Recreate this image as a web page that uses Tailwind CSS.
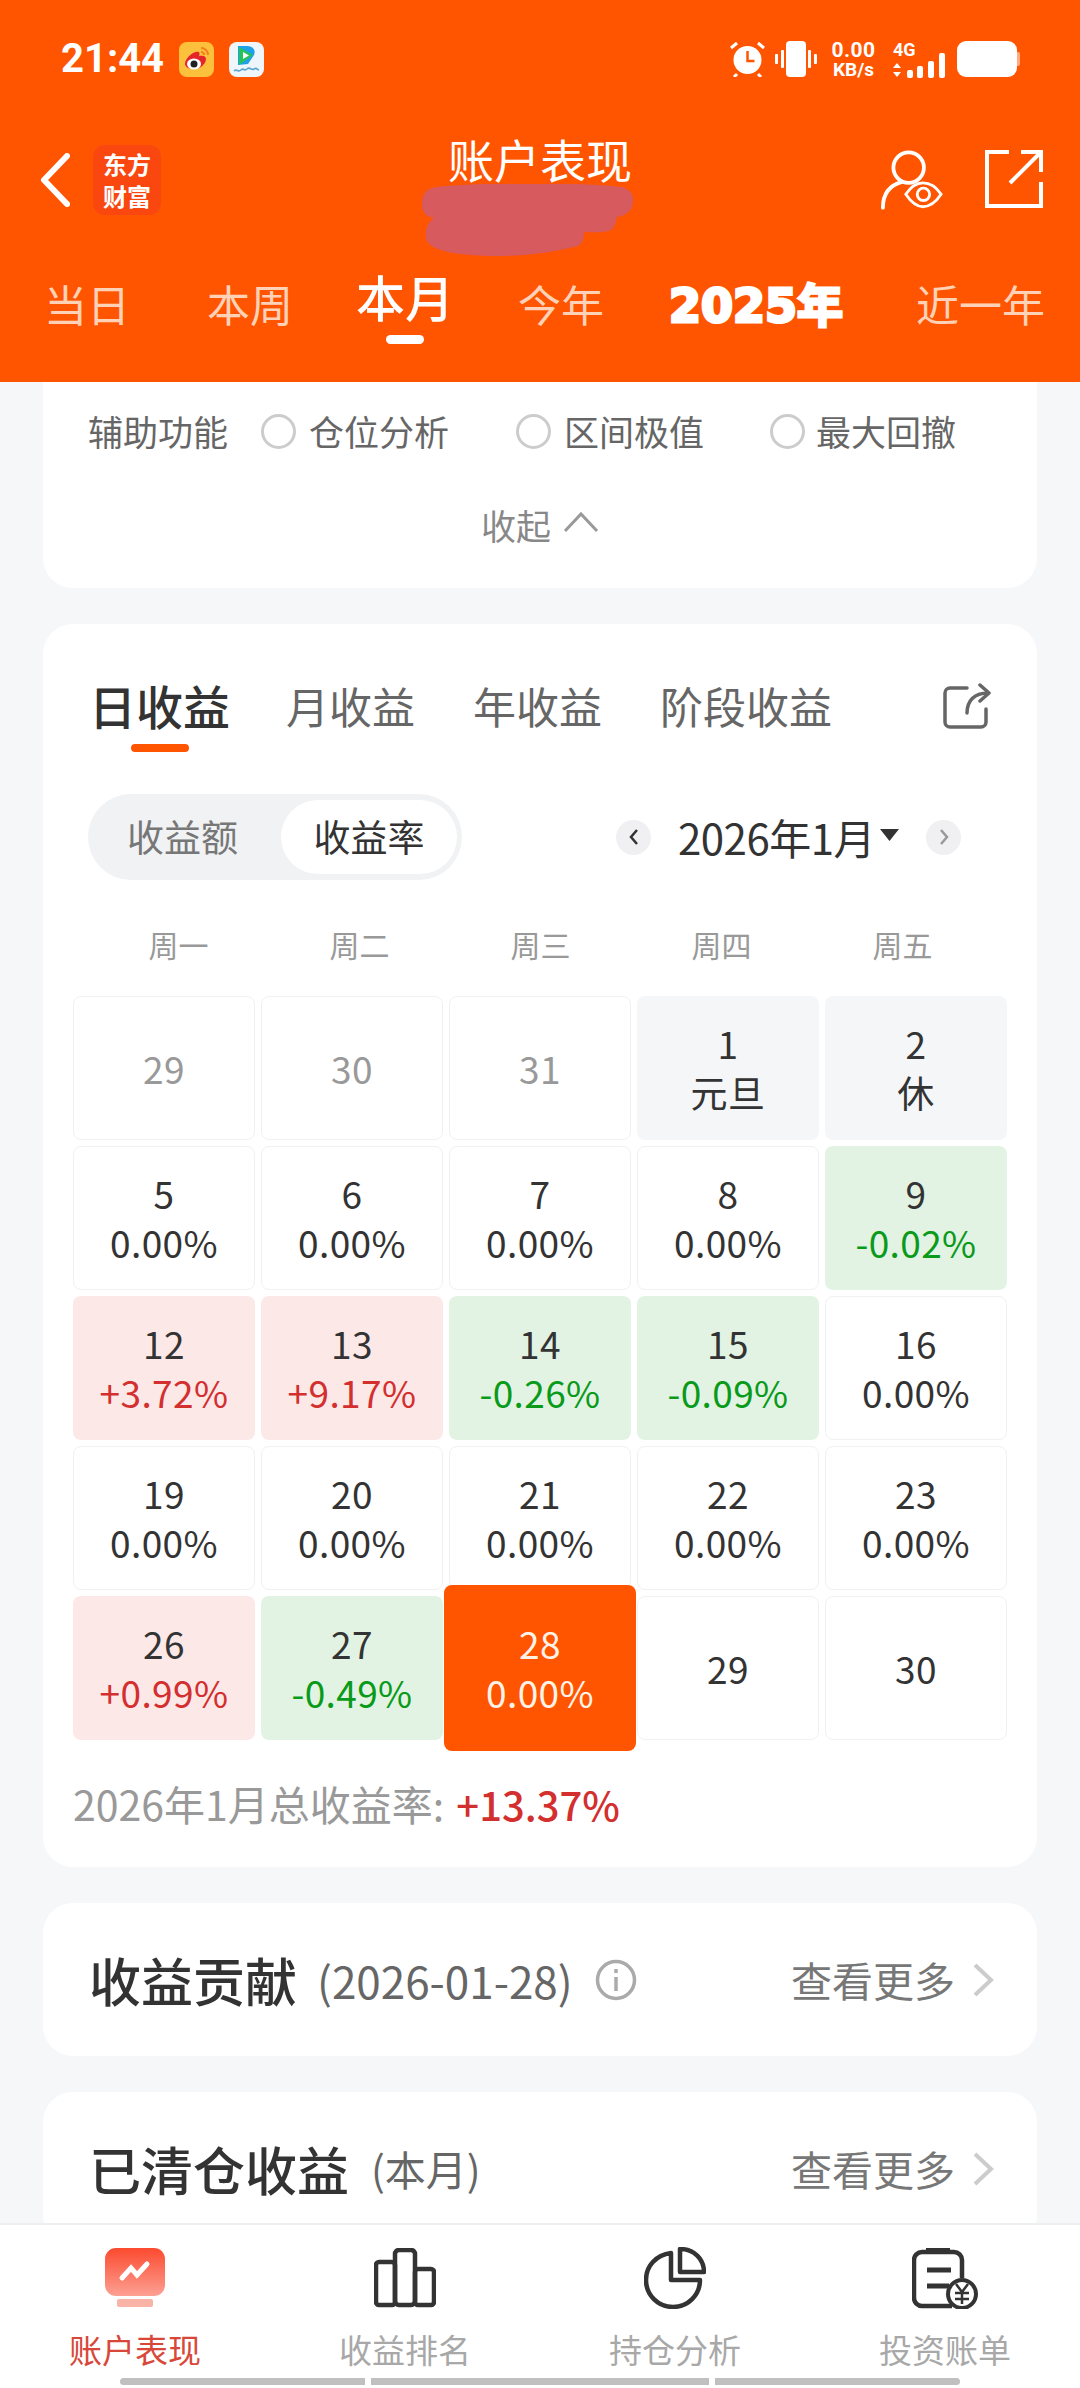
<!DOCTYPE html>
<html lang="zh-CN">
<head>
<meta charset="utf-8">
<script src="https://cdn.jsdelivr.net/npm/@tailwindcss/browser@4"></script>
</head>
<body class="bg-[#f6f7f9]">
<div class="w-[1080px] h-[2388px] flex flex-col overflow-hidden bg-[#f6f7f9] text-[#333] font-['Noto_Sans_CJK_SC','Noto_Sans',sans-serif]">

  <!-- Header -->
  <header class="h-[382px] shrink-0 bg-[#ff5500] text-white relative">
    <!-- status bar -->
    <div class="h-[118px] flex items-start justify-between pt-[41px] pl-[61px] pr-[60px]">
      <div class="flex items-center gap-[15px] h-[36px]">
        <span class="font-['Roboto',sans-serif] font-bold text-[40px] leading-none w-[103px]">21:44</span>
        <svg class="w-[35px] h-[35px]" viewBox="0 0 35 35"><rect width="35" height="35" rx="8" fill="#fbc13c"/><path d="M6 22c0-5 6-11 11-12 4-1 4 2 3 4 4-1 7 0 7 3 0 5-6 10-12 10-5 0-9-2-9-5z" fill="#e6252b"/><ellipse cx="15" cy="22" rx="7" ry="5.5" fill="#fff"/><circle cx="15" cy="22" r="3.5" fill="#222"/><path d="M22 6c4 0 7 3 7 7M22 10c2 0 3 1 3 3" stroke="#f4801f" stroke-width="2" fill="none"/></svg>
        <svg class="w-[35px] h-[35px]" viewBox="0 0 35 35"><rect width="35" height="35" rx="8" fill="#eef6fb"/><path d="M9 4h9c6 0 9 4 7 9l-6 9-10 1z" fill="#1fa1e8"/><path d="M10 5l14 8-14 10z" fill="#27c25b"/><path d="M14 10l6 3.5-6 3.5z" fill="#fff"/><path d="M5 29c3-3 4 2 7-1s3 2 6-1 4 2 7 0 3 1 5 1" stroke="#5aa6d0" stroke-width="1.6" fill="none"/></svg>
      </div>
      <div class="flex items-start h-[36px]">
        <svg class="w-[35px] h-[36px]" viewBox="0 0 35 36" fill="none" stroke="#fff"><circle cx="17.500" cy="19" r="14" fill="#fff" stroke="none"/><path d="M17.500 10v10h7" stroke="#ff5500" stroke-width="2.500"/><path d="M1 7l6-5M34 7l-6-5M7 33l-3 3M28 33l3 3" stroke-width="3"/></svg>
        <svg class="w-[42px] h-[36px] ml-[10px]" viewBox="0 0 42 36" fill="#fff"><rect x="11" width="20" height="36" rx="4"/><rect x="0" y="13" width="3" height="10" rx="1"/><rect x="6" y="9" width="3" height="18" rx="1"/><rect x="33" y="9" width="3" height="18" rx="1"/><rect x="39" y="13" width="3" height="10" rx="1"/></svg>
        <div class="ml-[13px] w-[47px] flex flex-col items-center font-['Roboto',sans-serif] font-bold">
          <span class="text-[21px] leading-[19px] tracking-[0.5px]">0.00</span>
          <span class="text-[19px] leading-[18px] mt-[1px]">KB/s</span>
        </div>
        <div class="ml-[16px] w-[54px] flex flex-col">
          <span class="font-['Roboto',sans-serif] font-bold text-[18px] leading-[16px] mt-[1px]">4G</span>
          <svg class="w-[54px] h-[25px] -mt-[5px]" viewBox="0 0 54 25" fill="#fff"><path d="M4 10l4 5H0zM4 24l4-5H0z"/><rect x="14" y="17" width="6" height="8" rx="2"/><rect x="24" y="13" width="6" height="12" rx="2"/><rect x="35" y="8" width="6" height="17" rx="2"/><rect x="46" y="0" width="6" height="25" rx="2"/></svg>
        </div>
        <div class="ml-[10px] w-[60px] h-[36px] bg-white rounded-[9px]"></div>
        <div class="w-[3px] h-[14px] mt-[11px] bg-white/50 rounded-r-[2px]"></div>
      </div>
    </div>

    <!-- title row -->
    <div class="h-[152px] flex items-start justify-between pl-[40px] pr-[35px]">
      <div class="flex items-center mt-[27px]">
        <svg class="w-[30px] h-[54px]" viewBox="0 0 30 54" fill="none" stroke="#fff" stroke-width="6" stroke-linecap="round" stroke-linejoin="round"><path d="M27 3L4 27l23 24"/></svg>
        <div class="ml-[23px] w-[68px] h-[70px] rounded-[12px] bg-[#f9470f] flex flex-col items-center justify-center font-bold text-[24px] leading-[32px] tracking-[0px]"><span>东方</span><span>财富</span></div>
      </div>
      <div class="flex flex-col items-center absolute left-0 right-0 top-[129px]">
        <span class="text-[46px] leading-[58px]">账户表现</span>
        <svg class="w-[212px] h-[72px] -mt-[3px] -translate-x-[12px]" viewBox="0 0 212 72" fill="#d65a5e"><path d="M14 3c50-5 140-5 185 0 10 2 13 8 12 16-1 8-8 13-16 14-1 6-3 12-8 14-10 2-18 1-25 1 0 6-2 12-6 14-25 6-50 10-80 10-30 0-70-3-72-18-1-10 2-16 8-20-8-1-12-6-12-14C0 10 4 5 14 3z"/></svg>
      </div>
      <div class="flex items-start mt-[32px]">
        <svg class="w-[62px] h-[60px]" viewBox="0 0 65 62" fill="none" stroke="#fff" stroke-width="4" stroke-linecap="round"><circle cx="29" cy="18" r="16"/><path d="M2 60c0-16 9-24 20-27"/><path d="M26 46c6-9 12-12 18-12s13 3 19 12c-6 9-13 13-19 13s-12-4-18-13z" stroke-width="3"/><circle cx="44.500" cy="46" r="6.500" stroke-width="3"/></svg>
        <svg class="w-[58px] h-[58px] ml-[44px] -translate-x-[2px]" viewBox="0 0 58 58" fill="none" stroke="#fff" stroke-width="4"><path d="M24 2H2v54h54V32"/><path d="M25 33L55 3M36 2h20v20"/></svg>
      </div>
    </div>

    <!-- range tabs -->
    <div class="flex items-start pl-[44px] text-[#ffd2b8] text-[43px] leading-[56px] whitespace-nowrap">
      <span class="mt-[5px]">当日</span>
      <span class="mt-[5px] ml-[77px]">本周</span>
      <div class="flex flex-col items-center -mt-[2px] ml-[63px]">
        <span class="text-[49px] leading-[56px] font-medium text-white">本月</span>
        <span class="w-[38px] h-[9px] rounded-full bg-white mt-[11px]"></span>
      </div>
      <span class="mt-[5px] ml-[64px]">今年</span>
      <span class="mt-[8px] ml-[65px] text-white font-bold text-[46px] leading-[56px] font-['DejaVu_Sans','Noto_Sans_CJK_SC',sans-serif] [-webkit-text-stroke:3px_#fff]">2025年</span>
      <span class="mt-[5px] ml-[73px]">近一年</span>
    </div>
  </header>

  <!-- Scroll area -->
  <main class="flex-1 min-h-0 overflow-hidden px-[43px] flex flex-col gap-[36px]">
    <!-- Card 1 -->
    <section class="shrink-0 h-[206px] bg-white rounded-b-[30px] text-[35px] text-[#666]">
      <div class="flex items-center h-[50px] mt-[24px] pl-[45px] leading-[50px]">
        <span class="w-[173px]">辅助功能</span>
        <span class="w-[35px] h-[35px] rounded-full border-[3px] border-[#ccc]"></span>
        <span class="ml-[13px] w-[207px]">仓位分析</span>
        <span class="w-[35px] h-[35px] rounded-full border-[3px] border-[#ccc]"></span>
        <span class="ml-[13px] w-[206px]">区间极值</span>
        <span class="w-[35px] h-[35px] rounded-full border-[3px] border-[#ccc]"></span>
        <span class="ml-[11px]">最大回撤</span>
      </div>
      <div class="flex items-center justify-center mt-[46px] text-[#888] leading-[46px]">
        <span>收起</span>
        <svg class="w-[36px] h-[22px] ml-[12px] -mt-[6px]" viewBox="0 0 36 22" fill="none" stroke="#999" stroke-width="3"><path d="M2 20L18 3l16 17"/></svg>
      </div>
    </section>

    <!-- Card 2 -->
    <section class="shrink-0 h-[1243px] bg-white rounded-[30px] pt-[53px] relative">
      <div class="flex items-start pl-[46px] text-[43px] leading-[56px] text-[#666]">
        <div class="flex flex-col items-center w-[141px]">
          <span class="text-[47px] font-medium text-[#333]">日收益</span>
          <span class="w-[58px] h-[8px] rounded-full bg-[#ff5500] mt-[11px]"></span>
        </div>
        <span class="ml-[56px]">月收益</span>
        <span class="ml-[58px]">年收益</span>
        <span class="ml-[58px]">阶段收益</span>
        <svg class="w-[48px] h-[46px] ml-[111px] mt-[6px]" viewBox="0 0 48 46" fill="none" stroke="#666" stroke-width="3.500" stroke-linejoin="round" stroke-linecap="round"><path d="M24 5H7a5 5 0 0 0-5 5v29a5 5 0 0 0 5 5h31a5 5 0 0 0 5-5V26"/><path d="M24 30c0-12 7-20 21-20M37 2l9 8-9 8"/></svg>
      </div>

      <div class="flex items-center mt-[42px] pl-[45px]">
        <div class="w-[374px] h-[86px] rounded-full bg-[#f1f2f4] flex items-center pl-[39px] text-[37px] text-[#777]">
          <span class="w-[154px]">收益额</span>
          <span class="w-[176px] h-[74px] rounded-full bg-white text-[#333] flex items-center justify-center">收益率</span>
        </div>
        <div class="ml-[154px] w-[35px] h-[35px] rounded-full bg-[#f0f0f3] flex items-center justify-center">
          <svg class="w-[12px] h-[18px]" viewBox="0 0 12 18" fill="none" stroke="#333" stroke-width="2.500"><path d="M9 2L3 9l6 7"/></svg>
        </div>
        <span class="ml-[27px] text-[42px] leading-[50px] w-[196px] whitespace-nowrap tracking-[-0.5px]">2026年1月</span>
        <svg class="w-[19px] h-[12px] ml-[6px] -mt-[4px]" viewBox="0 0 19 12" fill="#333"><path d="M0 0h19l-9.500 12z"/></svg>
        <div class="ml-[27px] w-[35px] h-[35px] rounded-full bg-[#f0f0f3] flex items-center justify-center">
          <svg class="w-[12px] h-[18px]" viewBox="0 0 12 18" fill="none" stroke="#999" stroke-width="2.500"><path d="M3 2l6 7-6 7"/></svg>
        </div>
      </div>

      <div class="grid grid-cols-5 w-[905px] ml-[45px] mt-[42px] text-center text-[30px] leading-[44px] text-[#999]">
        <span>周一</span><span>周二</span><span>周三</span><span>周四</span><span>周五</span>
      </div>

      <div class="grid grid-cols-5 gap-[6px] mx-[30px] mt-[30px] auto-rows-[144px] text-[37px] leading-[49px] tracking-[0.4px] text-center text-[#333]">
        <div class="rounded-[8px] border-[1.500px] border-[#f1f1f3] flex items-center justify-center text-[#999]">29</div>
        <div class="rounded-[8px] border-[1.500px] border-[#f1f1f3] flex items-center justify-center text-[#999]">30</div>
        <div class="rounded-[8px] border-[1.500px] border-[#f1f1f3] flex items-center justify-center text-[#999]">31</div>
        <div class="rounded-[8px] bg-[#f5f6f8] flex flex-col items-center justify-center"><span>1</span><span>元旦</span></div>
        <div class="rounded-[8px] bg-[#f5f6f8] flex flex-col items-center justify-center"><span>2</span><span>休</span></div>

        <div class="rounded-[8px] border-[1.500px] border-[#f1f1f3] flex flex-col items-center justify-center"><span>5</span><span>0.00%</span></div>
        <div class="rounded-[8px] border-[1.500px] border-[#f1f1f3] flex flex-col items-center justify-center"><span>6</span><span>0.00%</span></div>
        <div class="rounded-[8px] border-[1.500px] border-[#f1f1f3] flex flex-col items-center justify-center"><span>7</span><span>0.00%</span></div>
        <div class="rounded-[8px] border-[1.500px] border-[#f1f1f3] flex flex-col items-center justify-center"><span>8</span><span>0.00%</span></div>
        <div class="rounded-[8px] bg-[#e2f3e4] flex flex-col items-center justify-center"><span>9</span><span class="text-[#0a9a1a]">-0.02%</span></div>

        <div class="rounded-[8px] bg-[#fde8e8] flex flex-col items-center justify-center"><span>12</span><span class="text-[#d32f2f]">+3.72%</span></div>
        <div class="rounded-[8px] bg-[#fde8e8] flex flex-col items-center justify-center"><span>13</span><span class="text-[#d32f2f]">+9.17%</span></div>
        <div class="rounded-[8px] bg-[#e2f3e4] flex flex-col items-center justify-center"><span>14</span><span class="text-[#0a9a1a]">-0.26%</span></div>
        <div class="rounded-[8px] bg-[#e2f3e4] flex flex-col items-center justify-center"><span>15</span><span class="text-[#0a9a1a]">-0.09%</span></div>
        <div class="rounded-[8px] border-[1.500px] border-[#f1f1f3] flex flex-col items-center justify-center"><span>16</span><span>0.00%</span></div>

        <div class="rounded-[8px] border-[1.500px] border-[#f1f1f3] flex flex-col items-center justify-center"><span>19</span><span>0.00%</span></div>
        <div class="rounded-[8px] border-[1.500px] border-[#f1f1f3] flex flex-col items-center justify-center"><span>20</span><span>0.00%</span></div>
        <div class="rounded-[8px] border-[1.500px] border-[#f1f1f3] flex flex-col items-center justify-center"><span>21</span><span>0.00%</span></div>
        <div class="rounded-[8px] border-[1.500px] border-[#f1f1f3] flex flex-col items-center justify-center"><span>22</span><span>0.00%</span></div>
        <div class="rounded-[8px] border-[1.500px] border-[#f1f1f3] flex flex-col items-center justify-center"><span>23</span><span>0.00%</span></div>

        <div class="rounded-[8px] bg-[#fde8e8] flex flex-col items-center justify-center"><span>26</span><span class="text-[#d32f2f]">+0.99%</span></div>
        <div class="rounded-[8px] bg-[#e2f3e4] flex flex-col items-center justify-center"><span>27</span><span class="text-[#0a9a1a]">-0.49%</span></div>
        <div class="relative z-10 -mx-[5px] -my-[11px] rounded-[8px] bg-[#ff5500] text-[#fff3e8] flex flex-col items-center justify-center"><span>28</span><span>0.00%</span></div>
        <div class="rounded-[8px] border-[1.500px] border-[#f1f1f3] flex items-center justify-center">29</div>
        <div class="rounded-[8px] border-[1.500px] border-[#f1f1f3] flex items-center justify-center">30</div>
      </div>

      <div class="pl-[30px] mt-[35px] text-[41px] leading-[56px] text-[#999] whitespace-nowrap">2026年1月总收益率: <span class="text-[#d32f2f] text-[40px] font-medium ml-[3px]">+13.37%</span></div>
    </section>

    <!-- Card 3 -->
    <section class="shrink-0 h-[153px] bg-white rounded-[30px] flex items-center pl-[46px] pr-[42px] whitespace-nowrap">
      <span class="text-[52px] leading-[60px] font-medium">收益贡献</span>
      <span class="ml-[20px] text-[44px] text-[#666]">(2026-01-28)</span>
      <svg class="w-[42px] h-[42px] ml-[22px]" viewBox="0 0 42 42" fill="none" stroke="#aaa" stroke-width="3.500"><circle cx="21" cy="21" r="18.500"/><path d="M21 18v14M21 10v4"/></svg>
      <span class="ml-auto text-[41px] text-[#777] -translate-x-[2px]">查看更多</span>
      <svg class="w-[22px] h-[34px] ml-[16px] -translate-x-[1px]" viewBox="0 0 22 34" fill="none" stroke="#ccc" stroke-width="4"><path d="M3 2l16 15L3 32"/></svg>
    </section>

    <!-- Card 4 -->
    <section class="shrink-0 h-[153px] bg-white rounded-[30px] flex items-center pl-[46px] pr-[42px] whitespace-nowrap">
      <span class="text-[52px] leading-[60px] font-medium">已清仓收益</span>
      <span class="ml-[22px] text-[41px] text-[#666]">(本月)</span>
      <span class="ml-auto text-[41px] text-[#777] -translate-x-[2px]">查看更多</span>
      <svg class="w-[22px] h-[34px] ml-[16px] -translate-x-[1px]" viewBox="0 0 22 34" fill="none" stroke="#ccc" stroke-width="4"><path d="M3 2l16 15L3 32"/></svg>
    </section>
  </main>

  <!-- Bottom nav -->
  <nav class="h-[165px] shrink-0 bg-white border-t-2 border-[#eeeff1] relative">
    <div class="grid grid-cols-4 text-center text-[33px] leading-[40px] text-[#a8a8a8]">
      <div class="flex flex-col items-center text-[#d8483a]">
        <svg class="w-[60px] h-[60px] mt-[23px]" viewBox="0 0 60 60"><defs><linearGradient id="g1" x1="0" y1="0" x2="0" y2="1"><stop offset="0" stop-color="#fb4a2e"/><stop offset="1" stop-color="#fda093"/></linearGradient></defs><rect width="60" height="48" rx="11" fill="url(#g1)"/><rect x="12" y="51" width="36" height="8" rx="2" fill="#f9b3a7"/><path d="M17 30l9-10 6 7 10-11" stroke="#fff" stroke-width="5" fill="none" stroke-linecap="round"/></svg>
        <span class="mt-[21px]">账户表现</span>
      </div>
      <div class="flex flex-col items-center">
        <svg class="w-[62px] h-[60px] mt-[23px]" viewBox="0 0 62 60" fill="none" stroke="#333" stroke-width="4.500" stroke-linejoin="round"><rect x="2" y="14" width="19" height="43" rx="3"/><rect x="21" y="2" width="20" height="55" rx="4"/><rect x="41" y="21" width="19" height="36" rx="3"/></svg>
        <span class="mt-[21px]">收益排名</span>
      </div>
      <div class="flex flex-col items-center">
        <svg class="w-[62px] h-[62px] mt-[22px]" viewBox="0 0 62 62" fill="none" stroke="#333" stroke-width="4.500" stroke-linejoin="round"><path d="M27 6C12 8 2 19 2 33c0 15 12 27 27 27s27-12 27-27H27z"/><path d="M36 2v23h24C60 12 50 2 36 2z"/></svg>
        <span class="mt-[20px]">持仓分析</span>
      </div>
      <div class="flex flex-col items-center">
        <svg class="w-[66px] h-[62px] mt-[22px]" viewBox="0 0 66 62" fill="none" stroke="#333" stroke-width="4.500" stroke-linejoin="round"><path d="M40 59H10a8 8 0 0 1-8-8V13a8 8 0 0 1 8-8h32a8 8 0 0 1 8 8v18"/><path d="M14 4h24" stroke-width="6"/><path d="M15 23h24M15 39h22" stroke-width="5"/><circle cx="50" cy="47" r="14" stroke-width="4"/><path d="M44 37l6 8 6-8M43 46h14M43 52h14M50 45v12" stroke-width="2.500"/></svg>
        <span class="mt-[20px]">投资账单</span>
      </div>
    </div>
    <div class="absolute left-[120px] top-[153px] flex gap-[6px] h-[7px]">
      <span class="w-[245px] bg-[#c0c0c0] rounded-l-full"></span>
      <span class="w-[338px] bg-[#c0c0c0]"></span>
      <span class="w-[245px] bg-[#c0c0c0] rounded-r-full"></span>
    </div>
  </nav>
</div>
</body>
</html>
